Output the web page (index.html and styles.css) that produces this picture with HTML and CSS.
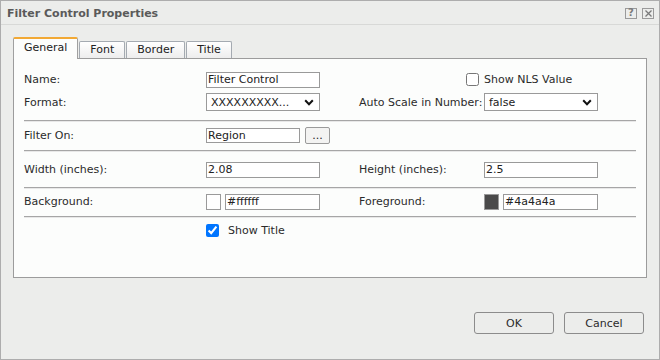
FILE: index.html
```html
<!DOCTYPE html>
<html lang="en">
<head>
  <meta charset="UTF-8" />
  <title>Filter Control Properties</title>
  <link rel="stylesheet" href="styles.css">
</head>
<body>
  <div class="dialog" role="dialog" aria-label="Filter Control Properties">
    <header class="titlebar">
      <span class="title">Filter Control Properties</span>
      <div class="title-tools">
        <span class="tool-btn">?</span>
        <span class="tool-btn">
          <svg width="9" height="9" viewBox="0 0 9 9"><path d="M1.5 1.5L7.5 7.5M7.5 1.5L1.5 7.5" stroke="#7a7a7a" stroke-width="1.3" fill="none"/></svg>
        </span>
      </div>
    </header>

    <div class="content">
      <div class="tabs">
        <div class="tab active">General</div>
        <div class="tab">Font</div>
        <div class="tab">Border</div>
        <div class="tab">Title</div>
      </div>

      <div class="panel">
        <div class="group group-format">
          <div class="row row-name">
            <label for="name">Name:</label>
            <input id="name" class="text w-full" type="text" value="Filter Control" />
            <span class="check-cell"><input type="checkbox" id="nls" /></span>
            <label for="nls">Show NLS Value</label>
          </div>
          <div class="row row-format">
            <span>Format:</span>
            <div class="select w-full">
              <span>XXXXXXXXX...</span>
              <svg width="10" height="7" viewBox="0 0 10 7"><path d="M1.2 1.3L5 5.2L8.8 1.3" stroke="#111" stroke-width="2" fill="none"/></svg>
            </div>
            <span>Auto Scale in Number:</span>
            <div class="select w-full">
              <span>false</span>
              <svg width="10" height="7" viewBox="0 0 10 7"><path d="M1.2 1.3L5 5.2L8.8 1.3" stroke="#111" stroke-width="2" fill="none"/></svg>
            </div>
          </div>
        </div>
        <div class="sep"></div>

        <div class="row row-filter">
          <label for="filter-on">Filter On:</label>
          <div class="field-pair">
            <input id="filter-on" class="text w-filter" type="text" value="Region" />
            <button class="dots" type="button">...</button>
          </div>
        </div>
        <div class="sep"></div>

        <div class="row row-size">
          <label for="width">Width (inches):</label>
          <input id="width" class="text w-full" type="text" value="2.08" />
          <label for="height">Height (inches):</label>
          <input id="height" class="text w-full" type="text" value="2.5" />
        </div>
        <div class="sep"></div>

        <div class="row row-color">
          <span>Background:</span>
          <div class="field-pair">
            <span class="swatch"></span>
            <input class="text w-color" type="text" value="#ffffff" />
          </div>
          <span>Foreground:</span>
          <div class="field-pair">
            <span class="swatch" style="background: #4a4a4a"></span>
            <input class="text w-color" type="text" value="#4a4a4a" />
          </div>
        </div>
        <div class="sep"></div>

        <div class="row row-title">
          <span></span>
          <div class="field-pair">
            <input type="checkbox" id="show-title" checked />
            <label for="show-title" class="check-label">Show Title</label>
          </div>
        </div>
      </div>
    </div>

    <footer class="footer">
      <button class="btn" type="button">OK</button>
      <button class="btn" type="button">Cancel</button>
    </footer>
  </div>
</body>
</html>
```

FILE: styles.css
```css
* {
  box-sizing: border-box;
}
body {
  margin: 0;
  font-family: 'DejaVu Sans', sans-serif;
  font-size: 11px;
  color: #2b2b2b;
}
.dialog {
  width: 660px;
  height: 360px;
  background: #ecedeb;
  border: 1px solid #adadad;
  display: flex;
  flex-direction: column;
}
.titlebar {
  height: 24px;
  border-bottom: 1px solid #d8d9d7;
  display: flex;
  align-items: center;
  justify-content: space-between;
  padding: 1px 5px 0 6px;
}
.title {
  font-weight: bold;
  color: #5a5a5a;
}
.title-tools {
  display: flex;
  gap: 5px;
}
.tool-btn {
  width: 12px;
  height: 11px;
  border: 1px solid #9a9a9a;
  display: flex;
  align-items: center;
  justify-content: center;
  font-size: 10px;
  font-weight: bold;
  color: #7a7a7a;
  line-height: 1;
}
.content {
  padding: 12px 12px 0;
}
.tabs {
  display: flex;
  align-items: flex-end;
  height: 21px;
}
.tab {
  height: 17px;
  line-height: 16px;
  padding: 0 10px;
  margin-right: 1px;
  border: 1px solid #a4aab1;
  border-bottom: none;
  border-radius: 2px 2px 0 0;
  background: linear-gradient(#ffffff, #ededed);
  color: #222;
}
.tab.active {
  position: relative;
  z-index: 1;
  height: 22px;
  line-height: 18px;
  padding: 0 10px 2px;
  margin-bottom: -1px;
  border-color: #a0a0a0;
  border-top: 2px solid #f2a935;
  background: #fcfdfc;
}
.panel {
  height: 220px;
  background: #fcfdfc;
  border: 1px solid #9c9c9c;
  padding: 0 10px;
}
.group-format {
  padding: 9px 0 7px;
}
.row {
  display: grid;
  grid-template-columns: 182px 153px 125px 1fr;
  align-items: center;
}
.row-name {
  height: 23px;
}
.row-format {
  height: 22px;
}
.row-filter {
  height: 28px;
  padding-bottom: 2px;
}
.row-size {
  height: 35px;
}
.row-color {
  height: 27px;
  padding-bottom: 2px;
}
.row-title {
  height: 25px;
}
.sep {
  height: 2px;
  border-top: 1px solid #a6a6a6;
  border-bottom: 1px solid #e8e8e8;
}
.text {
  height: 16px;
  border: 1px solid #9a9a9a;
  background: #fff;
  padding: 0 1px;
  font: inherit;
  color: #222;
  outline: none;
}
.w-full {
  width: 114px;
}
.w-filter {
  width: 94px;
  height: 15px;
}
.w-color {
  width: 95px;
}
.select {
  height: 18px;
  border: 1px solid #9a9a9a;
  background: #fff;
  display: flex;
  align-items: center;
  justify-content: space-between;
  padding: 0 5px 0 4px;
  color: #222;
}
.field-pair {
  display: flex;
  align-items: center;
  gap: 4px;
}
.dots {
  width: 25px;
  height: 17px;
  margin-left: 1px;
  border: 1px solid #9a9a9a;
  border-radius: 2px;
  background: #f3f3f2;
  font: inherit;
  line-height: 15px;
  padding: 0;
  color: #222;
}
.check-cell {
  justify-self: end;
  margin-right: 5px;
  display: flex;
}
input[type="checkbox"] {
  margin: 0;
  width: 13px;
  height: 13px;
}
.check-label {
  margin-left: 5px;
}
.swatch {
  width: 15px;
  height: 16px;
  border: 1px solid #9a9a9a;
  background: #fff;
}
.footer {
  display: flex;
  justify-content: flex-end;
  gap: 10px;
  padding: 34px 15px 0;
}
.btn {
  width: 80px;
  height: 22px;
  border: 1px solid #8c8c8c;
  border-radius: 3px;
  background: #ecedeb;
  font: inherit;
  color: #2b2b2b;
}
```
